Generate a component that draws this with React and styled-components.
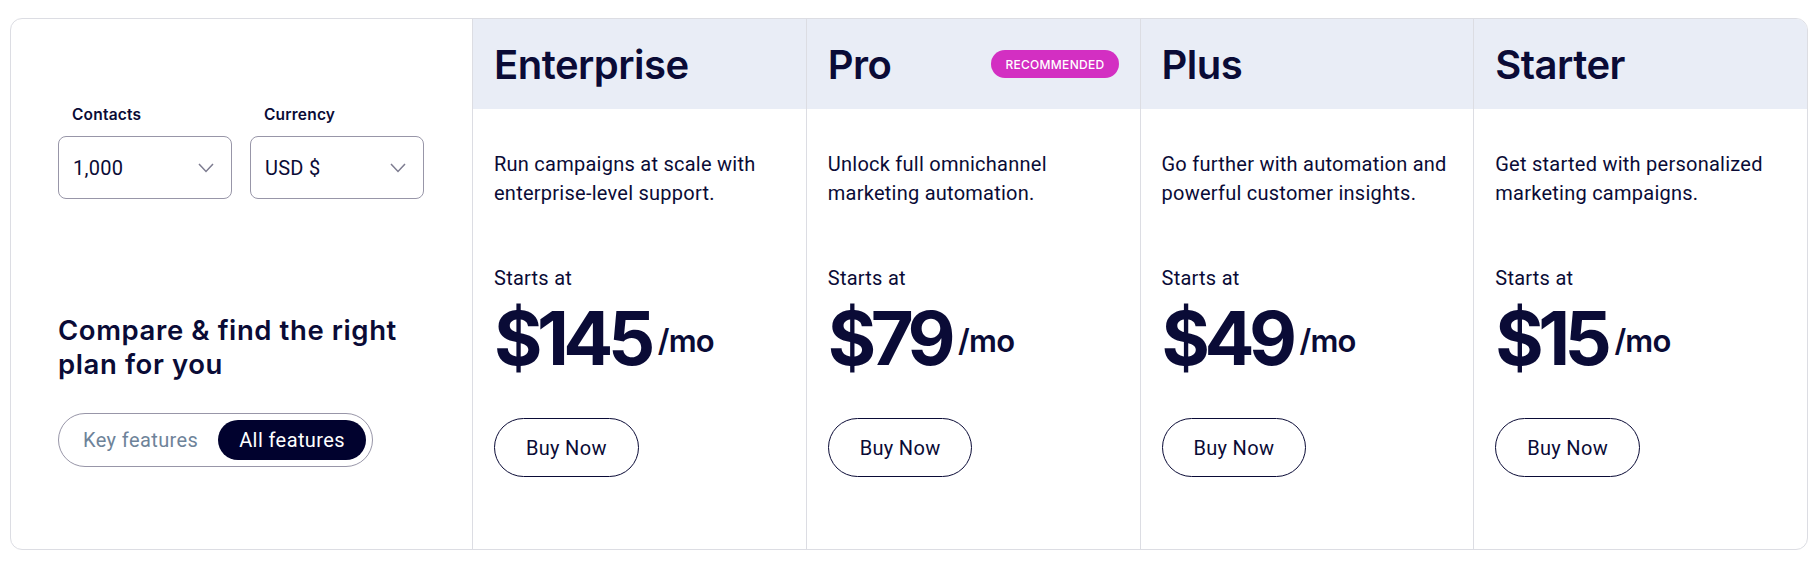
import styled, { createGlobalStyle } from "styled-components";

const plans = [
  {
    name: "Enterprise",
    text: "Run campaigns at scale with enterprise-level support.",
    price: "$145",
  },
  {
    name: "Pro",
    text: "Unlock full omnichannel marketing automation.",
    price: "$79",
    badge: "Recommended",
  },
  {
    name: "Plus",
    text: "Go further with automation and powerful customer insights.",
    price: "$49",
  },
  {
    name: "Starter",
    text: "Get started with personalized marketing campaigns.",
    price: "$15",
  },
];

const Chevron = () => (
  <svg width="16" height="10" viewBox="0 0 16 10" fill="none">
    <polyline points="1,1 8,8.5 15,1" stroke="#7d7c90" strokeWidth="1.5" />
  </svg>
);

const App = () => {
  return (
    <Page>
      <GlobalStyle />
      <Card>
        <Intro>
          <Fields>
            <Field>
              <Label>Contacts</Label>
              <Select>
                <span>1,000</span>
                <Chevron />
              </Select>
            </Field>
            <Field>
              <Label>Currency</Label>
              <Select>
                <span>USD $</span>
                <Chevron />
              </Select>
            </Field>
          </Fields>

          <Heading>Compare &amp; find the right plan for you</Heading>

          <Toggle>
            <ToggleOption>Key features</ToggleOption>
            <ToggleOption $active>All features</ToggleOption>
          </Toggle>
        </Intro>

        {plans.map((plan) => (
          <Plan key={plan.name}>
            <PlanHeader>
              <PlanName>{plan.name}</PlanName>
              {plan.badge && <Badge>{plan.badge}</Badge>}
            </PlanHeader>
            <PlanBody>
              <Description>{plan.text}</Description>
              <StartsAt>Starts at</StartsAt>
              <Price>
                <Amount>{plan.price}</Amount>
                <Per>/mo</Per>
              </Price>
              <BuyButton>Buy Now</BuyButton>
            </PlanBody>
          </Plan>
        ))}
      </Card>
    </Page>
  );
};

export default App;

const GlobalStyle = createGlobalStyle`
  body {
    margin: 0;
    background: #fff;
    font-family: Roboto, "Liberation Sans", sans-serif;
    letter-spacing: 0.25px;
    color: #0a0b36;
  }
`;

const Page = styled.div`
  padding: 18px 12px 16px 10px;
`;

const Card = styled.div`
  display: grid;
  grid-template-columns: 461px repeat(4, 1fr);
  height: 532px;
  box-sizing: border-box;
  border: 1px solid #dcdde3;
  border-radius: 12px;
  overflow: hidden;
  background: #fff;
`;

const Intro = styled.div`
  display: flex;
  flex-direction: column;
  padding: 86px 47px 0;
`;

const Fields = styled.div`
  display: flex;
  gap: 18px;
`;

const Field = styled.div`
  display: flex;
  flex-direction: column;
  gap: 11px;
`;

const Label = styled.div`
  padding-left: 14px;
  font-family: Inter, sans-serif;
  font-size: 15.5px;
  font-weight: 600;
  line-height: 20px;
  letter-spacing: 0.2px;
  color: #0a0b36;
`;

const Select = styled.div`
  display: flex;
  align-items: center;
  justify-content: space-between;
  width: 174px;
  height: 63px;
  box-sizing: border-box;
  padding: 0 17px 0 14px;
  border: 1px solid #9896a8;
  border-radius: 8px;
  font-size: 20px;
  color: #0a0b36;
`;

const Heading = styled.h2`
  margin: 114px 0 0;
  font-family: Inter, sans-serif;
  font-size: 27.5px;
  font-weight: 600;
  line-height: 34px;
  letter-spacing: 0.6px;
  color: #0a0b36;
  max-width: 370px;
`;

const Toggle = styled.div`
  display: flex;
  align-items: center;
  justify-content: space-between;
  width: 315px;
  height: 54px;
  box-sizing: border-box;
  margin-top: 32px;
  padding: 0 6px 0 24px;
  border: 1px solid #9896a8;
  border-radius: 27px;
`;

const ToggleOption = styled.div`
  display: flex;
  align-items: center;
  height: 40px;
  padding: ${(p) => (p.$active ? "0 21px" : "0")};
  border-radius: 20px;
  font-size: 20px;
  letter-spacing: 0.4px;
  background: ${(p) => (p.$active ? "#01022e" : "transparent")};
  color: ${(p) => (p.$active ? "#fff" : "#6e8399")};
`;

const Plan = styled.div`
  display: flex;
  flex-direction: column;
  border-left: 1px solid #dcdde3;
`;

const PlanHeader = styled.div`
  display: flex;
  align-items: center;
  justify-content: space-between;
  height: 90px;
  padding: 0 21px;
  background: #e9edf6;
`;

const PlanName = styled.h3`
  margin: 0;
  font-family: Inter, sans-serif;
  font-size: 40px;
  font-weight: 600;
  letter-spacing: -0.5px;
  color: #0a0b36;
`;

const Badge = styled.span`
  display: flex;
  align-items: center;
  height: 28px;
  padding: 0 14px;
  border-radius: 14px;
  background: #d32fc2;
  color: #fff;
  font-family: Inter, sans-serif;
  font-size: 12px;
  font-weight: 500;
  letter-spacing: 0.3px;
  text-transform: uppercase;
`;

const PlanBody = styled.div`
  display: flex;
  flex-direction: column;
  align-items: flex-start;
  padding: 41px 21px 0;
`;

const Description = styled.p`
  margin: 0;
  max-width: 292px;
  font-size: 20px;
  line-height: 29px;
`;

const StartsAt = styled.div`
  margin-top: 56px;
  font-size: 20px;
  line-height: 29px;
`;

const Price = styled.div`
  display: flex;
  align-items: center;
  margin-top: 8px;
`;

const Amount = styled.span`
  font-family: Inter, sans-serif;
  font-size: 74px;
  font-weight: 700;
  line-height: 74px;
  letter-spacing: -5.5px;
`;

const Per = styled.span`
  margin-left: 8px;
  margin-top: 4px;
  font-family: Inter, sans-serif;
  font-size: 31px;
  font-weight: 600;
  letter-spacing: -0.8px;
`;

const BuyButton = styled.button`
  margin-top: 43px;
  height: 59px;
  padding: 0 31px;
  border: 1px solid #0a0b36;
  border-radius: 30px;
  background: #fff;
  color: #0a0b36;
  font-family: Roboto, "Liberation Sans", sans-serif;
  font-size: 20px;
  letter-spacing: 0.3px;
  cursor: pointer;
`;
